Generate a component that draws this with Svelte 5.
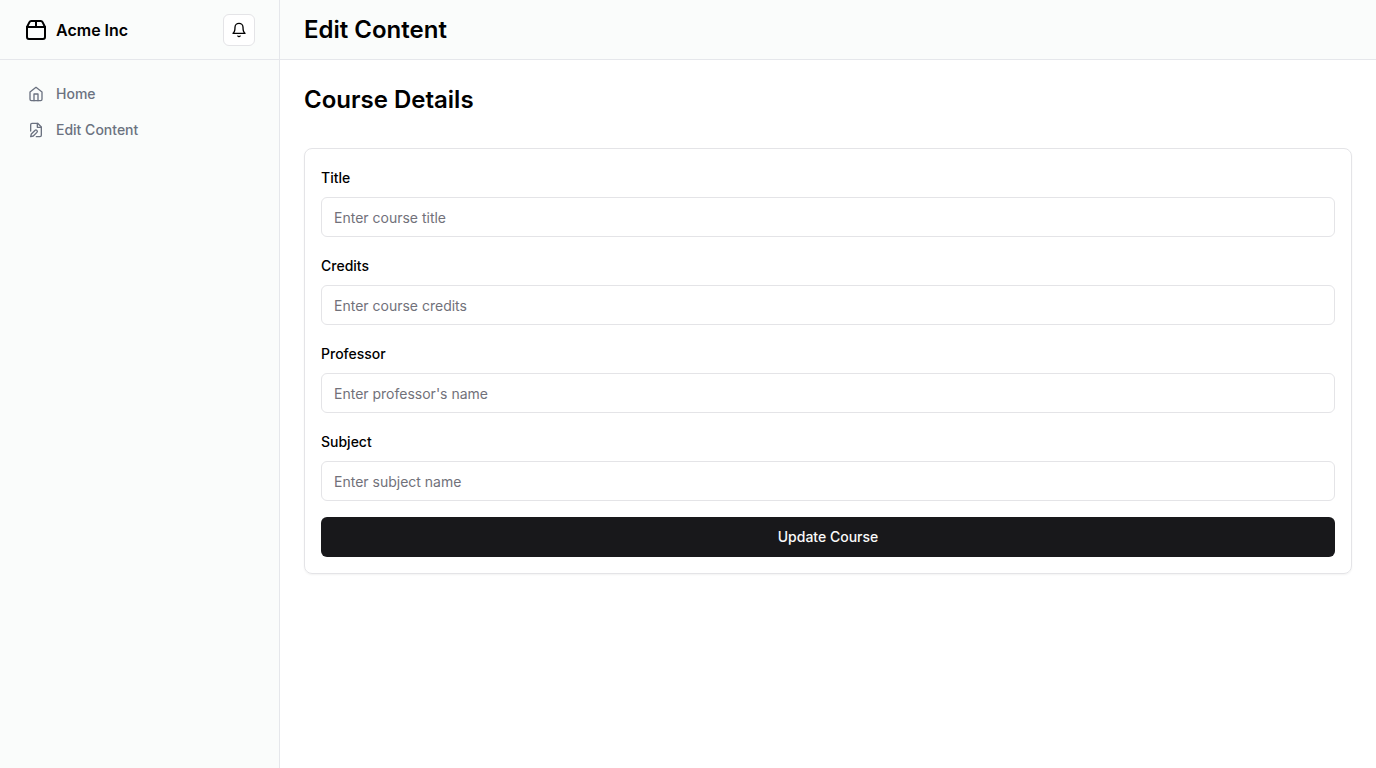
<script>
  const fields = [
    { id: 'title', label: 'Title', placeholder: 'Enter course title' },
    { id: 'credits', label: 'Credits', placeholder: 'Enter course credits' },
    { id: 'professor', label: 'Professor', placeholder: "Enter professor's name" },
    { id: 'subject', label: 'Subject', placeholder: 'Enter subject name' }
  ];
</script>

<div class="layout">
  <aside>
    <div class="brand-bar">
      <a class="brand" href="#home">
        <svg class="icon large" viewBox="0 0 24 24" aria-hidden="true">
          <path d="M3 9h18v10a2 2 0 0 1-2 2H5a2 2 0 0 1-2-2V9Z" />
          <path d="m3 9 2.45-4.9A2 2 0 0 1 7.24 3h9.52a2 2 0 0 1 1.8 1.1L21 9" />
          <path d="M12 3v6" />
        </svg>
        <span>Acme Inc</span>
      </a>
      <button class="bell" type="button" aria-label="Toggle notifications">
        <svg class="icon" viewBox="0 0 24 24" aria-hidden="true">
          <path d="M6 8a6 6 0 0 1 12 0c0 7 3 9 3 9H3s3-2 3-9" />
          <path d="M10.3 21a1.94 1.94 0 0 0 3.4 0" />
        </svg>
      </button>
    </div>
    <nav>
      <a href="#home">
        <svg class="icon" viewBox="0 0 24 24" aria-hidden="true">
          <path d="m3 9 9-7 9 7v11a2 2 0 0 1-2 2H5a2 2 0 0 1-2-2z" />
          <path d="M9 22V12h6v10" />
        </svg>
        Home
      </a>
      <a href="#edit">
        <svg class="icon" viewBox="0 0 24 24" aria-hidden="true">
          <path d="M4 13.5V4a2 2 0 0 1 2-2h8.5L20 7.5V20a2 2 0 0 1-2 2h-5.5" />
          <path d="M14 2v6h6" />
          <path d="M10.42 12.61a2.1 2.1 0 1 1 2.97 2.97L7.95 21 4 22l.99-3.95 5.43-5.44Z" />
        </svg>
        Edit Content
      </a>
    </nav>
  </aside>

  <div class="page">
    <header><h1>Edit Content</h1></header>
    <main>
      <h2>Course Details</h2>
      <form onsubmit={(event) => event.preventDefault()}>
        {#each fields as field}
          <div class="field">
            <label for={field.id}>{field.label}</label>
            <input id={field.id} type="text" placeholder={field.placeholder} />
          </div>
        {/each}
        <button class="submit" type="submit">Update Course</button>
      </form>
    </main>
  </div>
</div>

<style>
  :global(body) {
    margin: 0;
    background: #fff;
    color: #000;
    font-family: Inter, sans-serif;
    font-size: 16px;
    font-optical-sizing: none;
    line-height: 24px;
  }

  * {
    box-sizing: border-box;
  }

  .layout {
    display: grid;
    grid-template-columns: 280px minmax(0, 1fr);
    min-height: 100vh;
  }

  aside {
    background: #fafcfb;
    border-right: 1px solid #e5e7eb;
  }

  .brand-bar,
  header {
    display: flex;
    align-items: center;
    height: 60px;
    padding: 0 24px;
    border-bottom: 1px solid #e5e7eb;
  }

  header {
    background: #fafcfb;
  }

  a {
    display: flex;
    align-items: center;
    color: inherit;
    text-decoration: none;
  }

  .brand {
    gap: 8px;
    font-weight: 600;
  }

  .icon {
    width: 16px;
    height: 16px;
    flex: none;
    fill: none;
    stroke: currentColor;
    stroke-width: 2;
    stroke-linecap: round;
    stroke-linejoin: round;
  }

  .large {
    width: 24px;
    height: 24px;
  }

  button,
  input {
    font: inherit;
    color: inherit;
    border-radius: 6px;
  }

  button {
    display: flex;
    align-items: center;
    justify-content: center;
    padding: 0;
    cursor: pointer;
  }

  .bell {
    width: 32px;
    height: 32px;
    margin-left: auto;
    background: #fff;
    border: 1px solid #e4e4e7;
  }

  nav {
    display: grid;
    padding: 16px;
    font-size: 14px;
    line-height: 20px;
    font-weight: 500;
  }

  nav a {
    gap: 12px;
    padding: 8px 12px;
    color: #6b7280;
  }

  h1,
  h2 {
    margin: 0;
    font-size: 24px;
    line-height: 32px;
    font-weight: 600;
  }

  main {
    display: grid;
    gap: 32px;
    padding: 24px;
  }

  form {
    display: grid;
    gap: 16px;
    padding: 16px;
    border: 1px solid #e4e4e7;
    border-radius: 8px;
    box-shadow: 0 1px 2px rgb(0 0 0 / 5%);
  }

  label,
  input,
  .submit {
    font-size: 14px;
    line-height: 20px;
  }

  label {
    font-weight: 500;
  }

  input {
    display: block;
    width: 100%;
    height: 40px;
    margin-top: 8px;
    padding: 8px 12px;
    border: 1px solid #e4e4e7;
    background: #fff;
  }

  input::placeholder {
    color: #71717a;
    opacity: 1;
  }

  .submit {
    height: 40px;
    border: 0;
    background: #18181b;
    color: #fafafa;
    font-weight: 500;
  }
</style>
